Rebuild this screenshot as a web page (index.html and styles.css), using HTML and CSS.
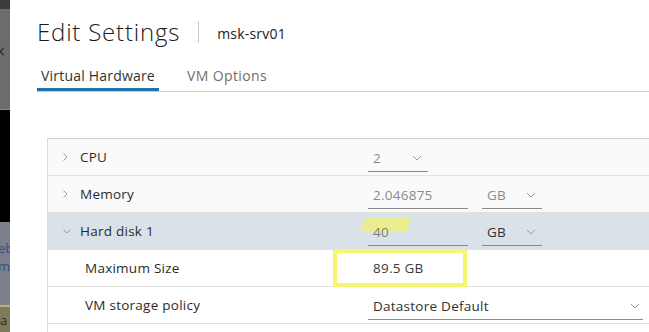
FILE: index.html
```html
<!DOCTYPE html>
<html lang="en">

<head>
  <meta charset="UTF-8" />
  <meta name="viewport" content="width=device-width, initial-scale=1.0" />
  <title>Edit Settings</title>
  <link rel="stylesheet" href="styles.css">
</head>

<body>
  <div class="screen">
    <div class="backdrop">
      <div class="bd bd-top"></div>
      <div class="bd bd-head"><span class="bd-x">×</span></div>
      <div class="bd bd-dark"></div>
      <div class="bd bd-list"><span>eb</span><span>m</span></div>
      <div class="bd bd-foot"><span>a</span></div>
    </div>

    <div class="modal">
      <div class="modal-head">
        <h1 class="title">Edit Settings</h1>
        <span class="divider"></span>
        <span class="vmname">msk-srv01</span>
      </div>

      <div class="tabs">
        <a class="tab active">Virtual Hardware</a>
        <a class="tab">VM Options</a>
      </div>

      <div class="hw-table">
        <div class="row shaded">
          <div class="label"><span class="caret">
              <svg width="7" height="10" viewBox="0 0 7 10"><path d="M1.5 1.5 L5 5 L1.5 8.5" /></svg></span>CPU</div>
          <div class="value">
            <div class="field sel w60"><span class="muted">2</span><span class="chev"><svg width="10" height="6" viewBox="0 0 10 6"><path d="M1 1 L5 5 L9 1" /></svg></span></div>
          </div>
        </div>

        <div class="row shaded">
          <div class="label"><span class="caret">
              <svg width="7" height="10" viewBox="0 0 7 10"><path d="M1.5 1.5 L5 5 L1.5 8.5" /></svg></span>Memory</div>
          <div class="value">
            <div class="field w100"><span class="muted">2.046875</span></div>
            <div class="field sel w60"><span class="muted">GB</span><span class="chev"><svg width="10" height="6" viewBox="0 0 10 6"><path d="M1 1 L5 5 L9 1" /></svg></span></div>
          </div>
        </div>

        <div class="row open">
          <div class="label"><span class="caret">
              <svg width="10" height="7" viewBox="0 0 10 7"><path d="M1.5 1.5 L5 5 L8.5 1.5" /></svg></span>Hard disk 1</div>
          <div class="value">
            <div class="field w100 marked"><span class="marker"></span><span class="muted">40</span></div>
            <div class="field sel w60"><span>GB</span><span class="chev"><svg width="10" height="6" viewBox="0 0 10 6"><path d="M1 1 L5 5 L9 1" /></svg></span></div>
          </div>
        </div>

        <div class="row">
          <div class="label sub">Maximum Size</div>
          <div class="value boxed">
            <span class="plain">89.5 GB</span>
            <span class="highlight"></span>
          </div>
        </div>

        <div class="row">
          <div class="label sub">VM storage policy</div>
          <div class="value">
            <div class="field sel wide"><span>Datastore Default</span><span class="chev"><svg width="10" height="6" viewBox="0 0 10 6"><path d="M1 1 L5 5 L9 1" /></svg></span></div>
          </div>
        </div>

        <div class="row tail"></div>
      </div>
    </div>
  </div>
</body>

</html>
```

FILE: styles.css
```css
body {
  margin: 0;
  font-family: "Open Sans", "Noto Sans", sans-serif;
  color: #313131;
  overflow: hidden;
}

.screen {
  display: flex;
  width: 649px;
  height: 332px;
  overflow: hidden;
}

/* page behind the modal */
.backdrop {
  width: 10px;
  flex: none;
  display: flex;
  flex-direction: column;
  overflow: hidden;
}

.bd {
  flex: none;
  overflow: hidden;
  font-size: 13px;
  line-height: 16px;
  white-space: nowrap;
}

.bd-top {
  height: 9px;
  background: #3b3b3b;
}

.bd-head {
  height: 101px;
  background: #6c6c6c;
  border-bottom: 1px solid #8a8a8a;
  box-sizing: border-box;
  padding-top: 34px;
}

.bd-x {
  color: #2a2a2a;
  font-size: 18px;
  margin-left: -5px;
}

.bd-dark {
  height: 112px;
  background: #000;
}

.bd-list {
  height: 83px;
  background: #7c7f8b;
  color: #3b4d80;
  display: flex;
  flex-direction: column;
  padding-top: 18px;
  box-sizing: border-box;
  gap: 2px;
}

.bd-list span {
  margin-left: -2px;
}

.bd-foot {
  height: 27px;
  background: #7e7a5c;
  border-top: 2px solid #b7b36a;
  box-sizing: border-box;
  color: #2a2a2a;
  padding-top: 5px;
}

/* modal */
.modal {
  flex: 1;
  background: #fff;
  padding-left: 27px;
  min-width: 0;
}

.modal-head {
  display: flex;
  align-items: center;
  height: 64px;
}

.title {
  margin: 0;
  font-size: 24px;
  font-weight: 300;
  letter-spacing: 0.8px;
  color: #1b1b1b;
  line-height: 30px;
  white-space: nowrap;
}

.divider {
  width: 1px;
  height: 22px;
  background: #c8c8c8;
  margin: 0 18px 0 18px;
}

.vmname {
  font-size: 14px;
  letter-spacing: 0.2px;
  color: #222;
  padding-top: 2px;
  white-space: nowrap;
}

.tabs {
  display: flex;
  gap: 24px;
  border-bottom: 1px solid #cccccc;
  height: 27px;
}

.tab {
  font-size: 14px;
  letter-spacing: 0.2px;
  color: #333;
  padding: 0 4px;
  line-height: 24px;
  box-sizing: border-box;
  height: 27px;
  white-space: nowrap;
  flex: none;
}

.tab + .tab {
  color: #6f6f6f;
  letter-spacing: 0.4px;
}

.tab.active {
  border-bottom: 3px solid #1d72aa;
}

/* hardware table */
.hw-table {
  margin: 46px 0 0 10px;
  border-left: 1px solid #dadada;
  border-top: 1px solid #cfcfcf;
}

.row {
  display: grid;
  grid-template-columns: 320px 1fr;
  height: 37px;
  border-bottom: 1px solid #e2e2e2;
  box-sizing: border-box;
  font-size: 13.5px;
  letter-spacing: 0.25px;
}

.row.shaded {
  background: #fafafa;
}

.row.open {
  background: #d9e2e9;
  border-bottom-color: #d9e2e9;
}

.row.tail {
  height: 12px;
  border-bottom: none;
}

.label {
  display: flex;
  align-items: center;
  padding-left: 14px;
  color: #2b2b2b;
  white-space: nowrap;
}

.label.sub {
  padding-left: 37px;
}

.caret {
  width: 18px;
  display: flex;
  align-items: center;
}

.caret path,
.chev path {
  fill: none;
  stroke: #9a9a9a;
  stroke-width: 1;
}

.value {
  display: flex;
  align-items: center;
  gap: 14px;
  white-space: nowrap;
}

.field {
  height: 26px;
  border-bottom: 1px solid #8a8a8a;
  box-sizing: border-box;
  display: flex;
  align-items: center;
  justify-content: space-between;
  padding: 0 6px 0 5px;
  position: relative;
  margin-top: 3px;
}

.muted {
  color: #8a8a8a;
}

.field.w60 {
  width: 60px;
}

.field.w100 {
  width: 100px;
}

.field.wide {
  width: 275px;
  padding-right: 3px;
}

.chev {
  display: flex;
  align-items: center;
}

.marker {
  position: absolute;
  left: -5px;
  top: -3px;
  width: 46px;
  height: 15px;
  background: rgba(238, 240, 110, 0.75);
  transform: skewX(-18deg);
}

.marked .muted {
  position: relative;
  color: #7f8262;
}

.boxed {
  position: relative;
}

.plain {
  padding-left: 5px;
  color: #3a3a3a;
}

.highlight {
  position: absolute;
  left: -35px;
  top: -1px;
  width: 134px;
  height: 38px;
  border: 4px solid #f6f66e;
  box-sizing: border-box;
}
```
